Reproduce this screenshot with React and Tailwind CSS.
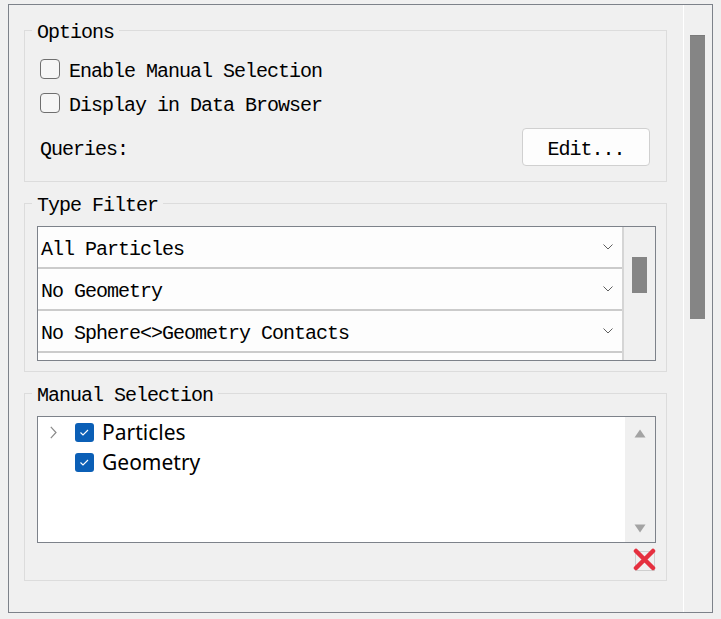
import React from 'react'

const mono = "font-['Liberation_Mono',monospace] text-[20px] tracking-[-1px] text-black"

function GroupBox({ title, className = '', children }) {
  return (
    <fieldset className={`border border-[#dcdcdc] ${className}`}>
      <legend className={`ml-[7px] px-[5px] pt-[6px] leading-[22px] ${mono}`}>{title}</legend>
      {children}
    </fieldset>
  )
}

// Liberation Mono sits high in its line box, so the labels get a little top padding
function Label({ children }) {
  return <span className={`pt-[6px] leading-[24px] whitespace-nowrap ${mono}`}>{children}</span>
}

function CheckRow({ label, className = '' }) {
  return (
    <div className={`flex items-center h-[24px] ${className}`}>
      <span className="w-[20px] h-[20px] mr-[9px] rounded-[4px] border border-[#6f6f6f] bg-[#f6f6f6]" />
      <Label>{label}</Label>
    </div>
  )
}

function Combo({ label }) {
  return (
    <div className="h-[42px] shrink-0 bg-[#fdfdfd] border-b-2 border-[#cbcbcb] flex items-center justify-between pl-[3px] pr-[9px]">
      <Label>{label}</Label>
      <svg width="10" height="6" viewBox="0 0 10 6" fill="none">
        <path d="M0.5 0.5 L5 5 L9.5 0.5" stroke="#5f5f5f" strokeWidth="1" />
      </svg>
    </div>
  )
}

function TreeItem({ label, expandable }) {
  return (
    <div className="h-[30px] flex items-center">
      <span className="w-[7px] flex items-center">
        {expandable && (
          <svg width="7" height="13" viewBox="0 0 7 13" fill="none">
            <path d="M0.8 0.8 L6 6.5 L0.8 12.2" stroke="#8a8a8a" strokeWidth="1.2" />
          </svg>
        )}
      </span>
      <span className="ml-[18px] w-[19px] h-[19px] rounded-[3px] bg-[#0b5fb6] flex items-center justify-center">
        <svg width="19" height="19" viewBox="0 0 19 19" fill="none">
          <path d="M5.5 9.5 L8 12 L13 7" stroke="#ffffff" strokeWidth="1.1" />
        </svg>
      </span>
      <span className="ml-[8px] font-['Noto_Sans',sans-serif] text-[21px] leading-[30px] text-black">{label}</span>
    </div>
  )
}

export default function App() {
  return (
    <div className="w-[721px] h-[619px] bg-[#f0f0f0] pt-[4px] pl-[8px]">
      <div className="w-[705px] h-[609px] border border-[#7d828a] flex">
        {/* group boxes */}
        <div className="flex-1 flex flex-col pl-[15px] pr-[16px] pt-[11px]">
          <GroupBox title="Options">
            <div className="flex flex-col pl-[15px] pr-[16px] pt-[13px] pb-[15px]">
              <CheckRow label="Enable Manual Selection" />
              <CheckRow label="Display in Data Browser" className="mt-[10px]" />
              <div className="mt-[13px] h-[38px] flex items-center justify-between">
                <Label>Queries:</Label>
                <button className="w-[128px] h-[38px] rounded-[4px] border border-[#d0d0d0] bg-[#fdfdfd] flex items-center justify-center">
                  <Label>Edit...</Label>
                </button>
              </div>
            </div>
          </GroupBox>

          <GroupBox title="Type Filter" className="mt-[7px]">
            <div className="pl-[12px] pr-[10px] pt-[9px] pb-[10px]">
              <div className="h-[135px] border border-[#7d828a] flex">
                <div className="flex-1 flex flex-col overflow-hidden border-r-2 border-[#d5d5d5]">
                  <Combo label="All Particles" />
                  <Combo label="No Geometry" />
                  <Combo label="No Sphere<>Geometry Contacts" />
                  <Combo label="" />
                </div>
                <div className="w-[31px] bg-[#f0f0f0] pt-[30px] flex justify-center">
                  <div className="w-[15px] h-[36px] bg-[#858585]" />
                </div>
              </div>
            </div>
          </GroupBox>

          <GroupBox title="Manual Selection" className="mt-[7px]">
            <div className="pl-[12px] pr-[10px] pt-[9px] pb-[9px]">
              <div className="h-[127px] border border-[#7d828a] bg-white flex">
                <div className="flex-1 flex flex-col pl-[12px]">
                  <TreeItem label="Particles" expandable />
                  <TreeItem label="Geometry" />
                </div>
                <div className="w-[30px] bg-[#f0f0f0] flex flex-col items-center justify-between pt-[12px] pb-[9px]">
                  <svg width="12" height="9" viewBox="0 0 12 9">
                    <path d="M6 0.5 L11.5 8.5 L0.5 8.5 Z" fill="#a3a3a3" />
                  </svg>
                  <svg width="12" height="9" viewBox="0 0 12 9">
                    <path d="M0.5 0.5 L11.5 0.5 L6 8.5 Z" fill="#a3a3a3" />
                  </svg>
                </div>
              </div>
              <div className="mt-[5px] flex justify-end">
                <svg width="23" height="23" viewBox="0 0 23 23" fill="none">
                  <rect x="2.5" y="3.5" width="19" height="19" stroke="#cfcfcf" strokeWidth="1" />
                  <path d="M3 3 L20 20 M20 3 L3 20" stroke="#e5303f" strokeWidth="4.5" strokeLinecap="round" />
                </svg>
              </div>
            </div>
          </GroupBox>
        </div>

        {/* outer scrollbar */}
        <div className="w-[29px] border-l border-white pt-[30px] pl-[6px]">
          <div className="w-[15px] h-[284px] bg-[#858585] border-t border-[#7a7a7a]" />
        </div>
      </div>
    </div>
  )
}
